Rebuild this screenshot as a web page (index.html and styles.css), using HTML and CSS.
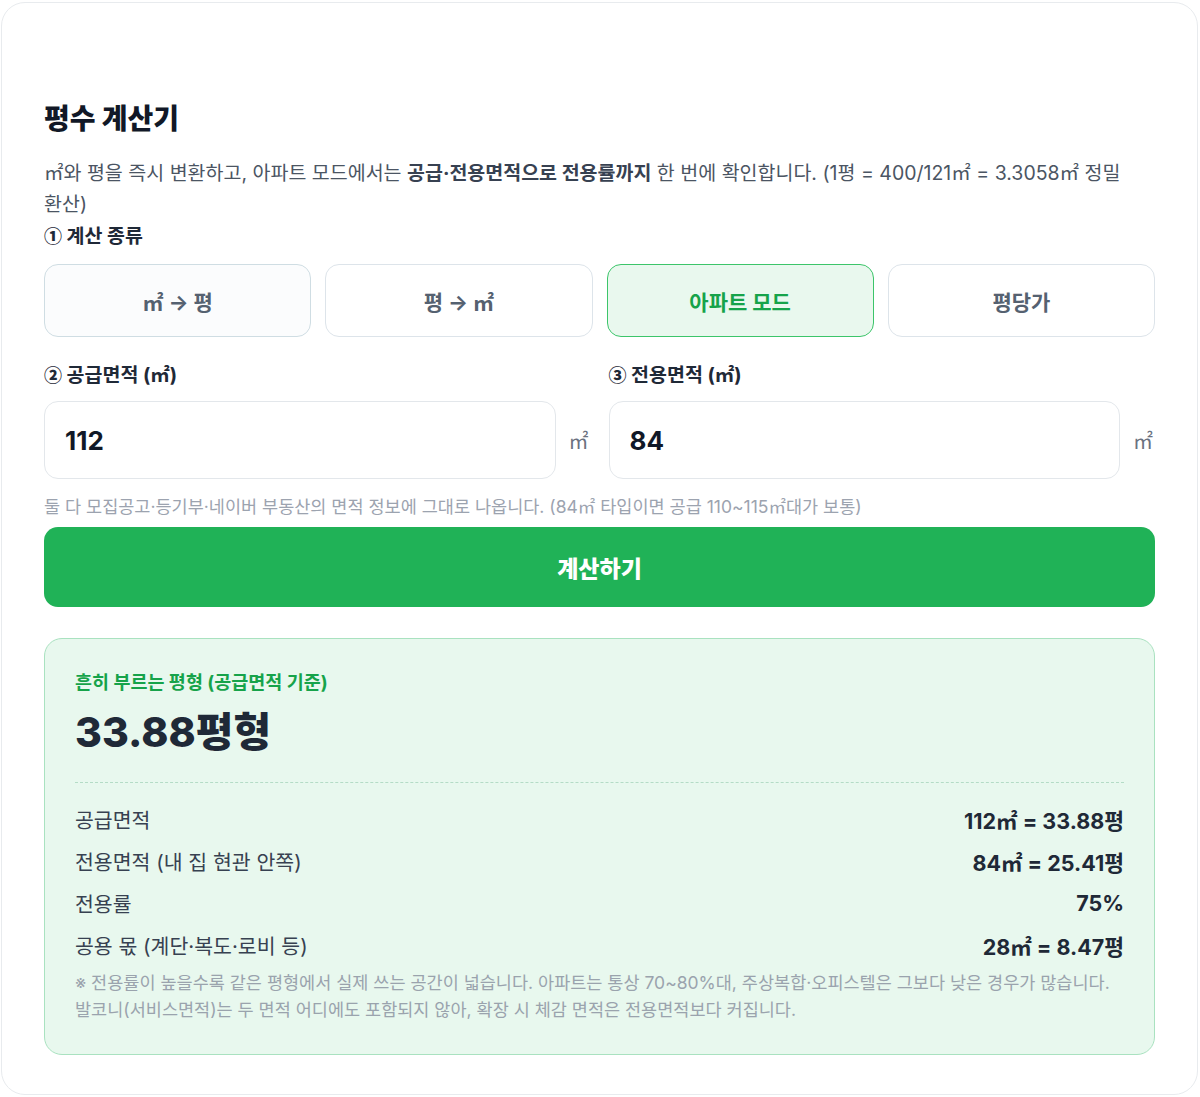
FILE: index.html
```html
<!DOCTYPE html>
<html lang="ko">
<head>
<meta charset="utf-8">
<title>평수 계산기</title>
<link rel="stylesheet" href="styles.css">
</head>
<body>
<div class="card">
  <h1 class="title">평수 계산기</h1>
  <p class="desc">㎡와 평을 즉시 변환하고, 아파트 모드에서는 <strong>공급·전용면적으로 전용률까지</strong> 한 번에 확인합니다. (1평 = 400/121㎡ = 3.3058㎡ 정밀 환산)</p>
  <div class="label"><span class="num">①</span> 계산 종류</div>
  <div class="tabs">
    <button class="tab tab-first">㎡ → 평</button>
    <button class="tab">평 → ㎡</button>
    <button class="tab tab-active">아파트 모드</button>
    <button class="tab">평당가</button>
  </div>
  <div class="fields">
    <div class="field">
      <div class="label"><span class="num">②</span> 공급면적 (㎡)</div>
      <div class="input-row">
        <div class="input">112</div>
        <span class="unit">㎡</span>
      </div>
    </div>
    <div class="field">
      <div class="label"><span class="num">③</span> 전용면적 (㎡)</div>
      <div class="input-row">
        <div class="input">84</div>
        <span class="unit">㎡</span>
      </div>
    </div>
  </div>
  <p class="hint">둘 다 모집공고·등기부·네이버 부동산의 면적 정보에 그대로 나옵니다. (84㎡ 타입이면 공급 110~115㎡대가 보통)</p>
  <button class="calc">계산하기</button>
  <div class="result">
    <div class="result-label">흔히 부르는 평형 (공급면적 기준)</div>
    <div class="result-big">33.88평형</div>
    <div class="divider"></div>
    <div class="rows">
      <div class="row"><span class="row-k">공급면적</span><span class="row-v">112㎡ = 33.88평</span></div>
      <div class="row"><span class="row-k">전용면적 (내 집 현관 안쪽)</span><span class="row-v">84㎡ = 25.41평</span></div>
      <div class="row"><span class="row-k">전용률</span><span class="row-v">75%</span></div>
      <div class="row"><span class="row-k">공용 몫 (계단·복도·로비 등)</span><span class="row-v">28㎡ = 8.47평</span></div>
    </div>
    <p class="note">※ 전용률이 높을수록 같은 평형에서 실제 쓰는 공간이 넓습니다. 아파트는 통상 70~80%대, 주상복합·오피스텔은 그보다 낮은 경우가 많습니다.<br>발코니(서비스면적)는 두 면적 어디에도 포함되지 않아, 확장 시 체감 면적은 전용면적보다 커집니다.</p>
  </div>
</div>
</body>
</html>
```

FILE: styles.css
```css
* { box-sizing: border-box; }
html, body { margin: 0; padding: 0; background: #ffffff; }
body {
  padding: 2px 2px 0 1px;
  font-family: Inter, "Noto Sans CJK KR", sans-serif;
  color: #1f2937;
}
.card {
  width: 1197px;
  height: 1093px;
  border: 1px solid #e8ebee;
  border-radius: 24px;
  padding: 98px 42px 40px 42px;
  background: #fff;
}
.title {
  margin: 0;
  font-size: 28px;
  line-height: 36px;
  font-weight: 800;
  color: #111827;
}
.desc {
  margin: 21px 0 3px;
  font-size: 19.5px;
  line-height: 31px;
  color: #4b5563;
  word-break: keep-all;
}
.desc strong { color: #374151; font-weight: 700; }
.label {
  font-size: 19.5px;
  line-height: 25px;
  font-weight: 700;
  color: #1f2937;
}
.num {
  font-family: "Noto Sans CJK KR", sans-serif;
  font-size: 18px;
  font-weight: 900;
}
.tabs {
  display: grid;
  grid-template-columns: repeat(4, 1fr);
  gap: 14px;
  margin-top: 15px;
}
.tab {
  height: 73px;
  border: 1.5px solid #dde4ea;
  border-radius: 14px;
  background: #fff;
  font-family: inherit;
  font-size: 21px;
  font-weight: 700;
  color: #556170;
}
.tab-first { background: #fbfcfd; border-color: #cfdde3; }
.tab-active {
  background: #e9f8ee;
  border-color: #3cc56a;
  color: #16a34a;
}
.fields {
  display: grid;
  grid-template-columns: 1fr 1fr;
  gap: 18px;
  margin-top: 25px;
}
.input-row {
  display: flex;
  align-items: center;
  gap: 13px;
  margin-top: 13px;
}
.input {
  flex: 1;
  height: 78px;
  border: 1.5px solid #e3e7eb;
  border-radius: 14px;
  padding: 0 20px;
  display: flex;
  align-items: center;
  font-size: 26px;
  font-weight: 700;
  color: #111827;
}
.unit {
  font-size: 20px;
  color: #6b7280;
  width: 22px;
}
.hint {
  margin: 16px 0 8px;
  font-size: 17.5px;
  line-height: 24px;
  color: #9ca3af;
}
.calc {
  display: block;
  width: 100%;
  height: 80px;
  border: none;
  border-radius: 14px;
  background: #20b257;
  color: #fff;
  font-family: inherit;
  font-size: 23px;
  font-weight: 800;
}
.result {
  margin-top: 31px;
  background: #e8f8ee;
  border: 1.5px solid #a9e2c0;
  border-radius: 18px;
  padding: 31px 30px 31px;
}
.result-label {
  font-size: 18.5px;
  line-height: 24px;
  font-weight: 700;
  color: #16a34a;
}
.result-big {
  margin-top: 13px;
  font-size: 41px;
  line-height: 50px;
  font-weight: 800;
  color: #1f2937;
}
.divider {
  margin-top: 25px;
  border-top: 1.5px dashed #b4dcc6;
}
.rows { margin-top: 15px; }
.row {
  display: flex;
  justify-content: space-between;
  align-items: center;
  height: 42px;
  font-size: 20.5px;
}
.row-k { color: #374151; }
.row-v { font-weight: 700; color: #1f2937; font-size: 21.5px; }
.note {
  margin: 3px 0 0;
  font-size: 17.5px;
  line-height: 27px;
  color: #9aa3ad;
}
```
